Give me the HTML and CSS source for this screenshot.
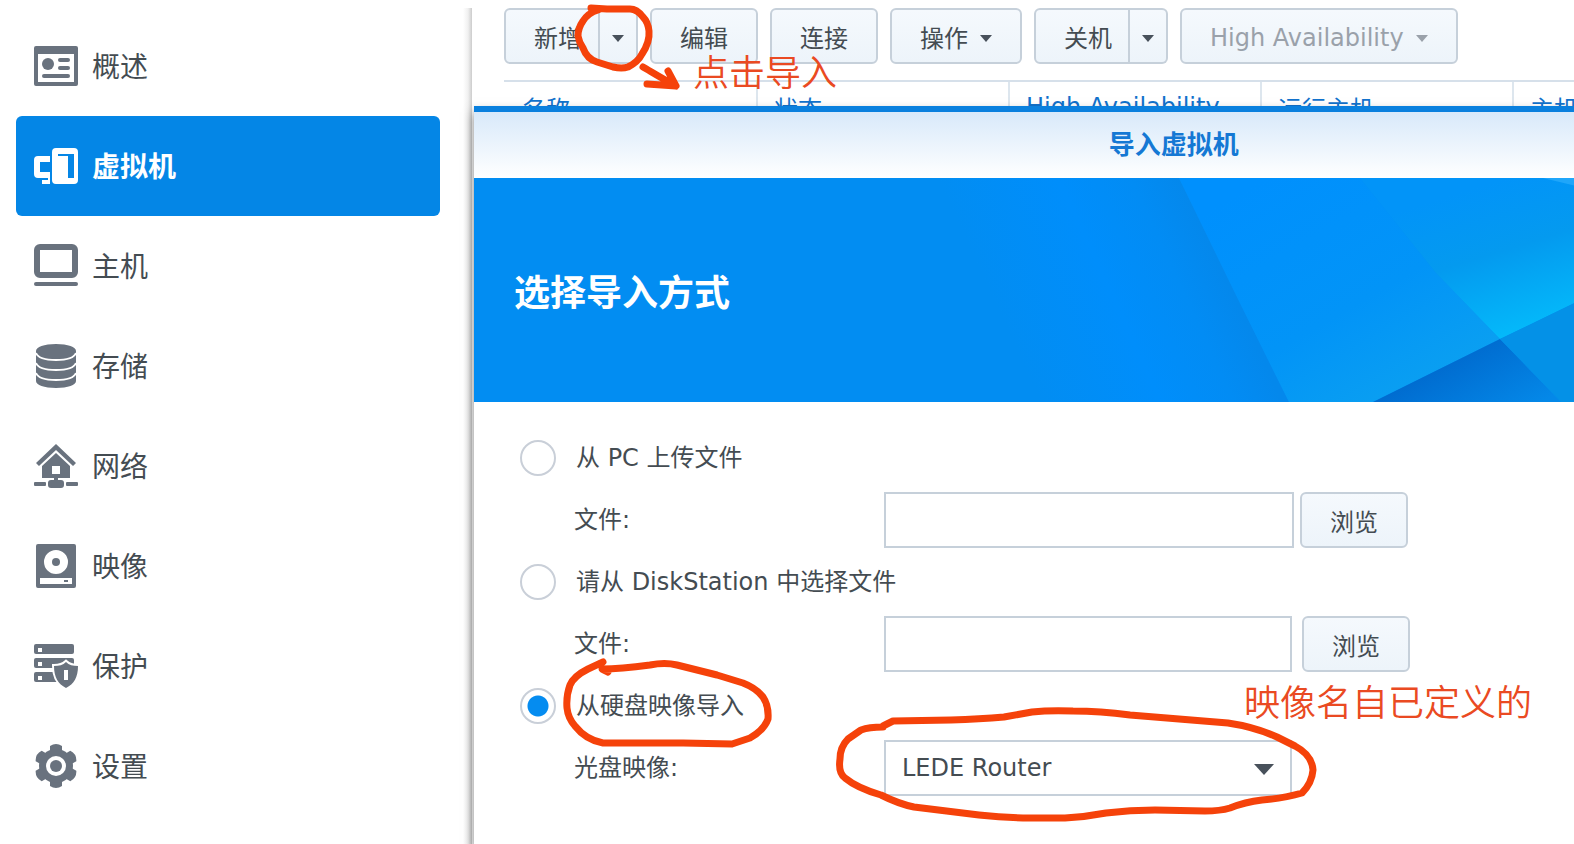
FILE: index.html
```html
<!DOCTYPE html>
<html lang="zh-CN">

<head>
    <meta charset="UTF-8">
    <meta name="viewport" content="width=device-width, initial-scale=1.0">
    <title>导入虚拟机</title>
    <link rel="stylesheet" href="styles.css">
</head>

<body>
    <div class="app">
        <nav class="sidebar">
            <a class="nav-item" href="#overview">
                <svg class="nav-icon" viewBox="0 0 44 44">
                    <path fill-rule="evenodd" d="M2 2h40a2 2 0 0 1 2 2v36a2 2 0 0 1-2 2H2a2 2 0 0 1-2-2V4a2 2 0 0 1 2-2zM4 10v28h36V10z"/>
                    <circle cx="14" cy="20" r="6"/>
                    <rect x="24" y="14" width="12" height="4" rx="2"/>
                    <rect x="24" y="22" width="12" height="4" rx="2"/>
                    <rect x="8" y="30" width="28" height="4" rx="2"/>
                </svg>
                <span class="nav-text">概述</span>
            </a>
            <a class="nav-item active" href="#vm">
                <svg class="nav-icon" viewBox="0 0 44 44">
                    <path d="M4 12h12v6H6v10h10v8h-2v-2H4a4 4 0 0 1-4-4V16a4 4 0 0 1 4-4zM8 36h8v4H8z"/>
                    <path fill-rule="evenodd" d="M22 4h18a4 4 0 0 1 4 4v28a4 4 0 0 1-4 4H22a4 4 0 0 1-4-4V8a4 4 0 0 1 4-4zM24 10v2h10v22h6V10z"/>
                </svg>
                <span class="nav-text">虚拟机</span>
            </a>
            <a class="nav-item" href="#host">
                <svg class="nav-icon" viewBox="0 0 44 44">
                    <path fill-rule="evenodd" d="M6 0h32a6 6 0 0 1 6 6v22a6 6 0 0 1-6 6H6a6 6 0 0 1-6-6V6a6 6 0 0 1 6-6zM6 6v22h32V6z"/>
                    <rect y="38" width="44" height="4" rx="2"/>
                </svg>
                <span class="nav-text">主机</span>
            </a>
            <a class="nav-item" href="#storage">
                <svg class="nav-icon" viewBox="0 0 44 44">
                    <path d="M2 7C2 3 10 0 22 0s20 3 20 7v30c0 4-8 7-20 7S2 41 2 37z"/>
                    <path class="cut" d="M2 9c2 5 10 7 20 7s18-2 20-7M2 19c2 5 10 7 20 7s18-2 20-7M2 29c2 5 10 7 20 7s18-2 20-7"/>
                </svg>
                <span class="nav-text">存储</span>
            </a>
            <a class="nav-item" href="#network">
                <svg class="nav-icon" viewBox="0 0 44 44">
                    <path d="M22 0l20 19-3 3L22 6 5 22l-3-3z"/>
                    <path fill-rule="evenodd" d="M22 9l14 13v12H24v2h3a3 3 0 0 1 3 3v2a3 3 0 0 1-3 3H17a3 3 0 0 1-3-3v-2a3 3 0 0 1 3-3h3v-2H8V22zM18 22v8h8v-8z"/>
                    <rect y="38" width="12" height="4" rx="1"/>
                    <rect x="32" y="38" width="12" height="4" rx="1"/>
                </svg>
                <span class="nav-text">网络</span>
            </a>
            <a class="nav-item" href="#image">
                <svg class="nav-icon" viewBox="0 0 44 44">
                    <path fill-rule="evenodd" d="M4 0h36a2 2 0 0 1 2 2v40a2 2 0 0 1-2 2H4a2 2 0 0 1-2-2V2a2 2 0 0 1 2-2zM22 6a12 12 0 1 0 0 24 12 12 0 0 0 0-24zM6 34v6h32v-6z"/>
                    <circle cx="22" cy="18" r="4"/>
                    <rect x="30" y="36" width="4" height="2"/>
                </svg>
                <span class="nav-text">映像</span>
            </a>
            <a class="nav-item" href="#protection">
                <svg class="nav-icon" viewBox="0 0 44 44">
                    <rect width="40" height="10" rx="2"/>
                    <rect y="14" width="40" height="10" rx="2"/>
                    <rect y="28" width="40" height="10" rx="2"/>
                    <path class="hole" d="M4 4h4v4H4zM4 18h4v4H4zM4 32h4v4H4z"/>
                    <path class="shield" d="M32 18c3 3 7 4 12 4 0 11-4 18-12 22-8-4-12-11-12-22 5 0 9-1 12-4z"/>
                    <path class="hole" d="M30 26h4v10h-4z"/>
                </svg>
                <span class="nav-text">保护</span>
            </a>
            <a class="nav-item" href="#settings">
                <svg class="nav-icon" viewBox="0 0 44 44">
                    <path d="M16 8V2q6-4 12 0v6zM16 36v6q6 4 12 0v-6z"/>
                    <path d="M16 8V2q6-4 12 0v6zM16 36v6q6 4 12 0v-6z" transform="rotate(60 22 22)"/>
                    <path d="M16 8V2q6-4 12 0v6zM16 36v6q6 4 12 0v-6z" transform="rotate(120 22 22)"/>
                    <circle cx="22" cy="22" r="17"/>
                    <circle class="hole" cx="22" cy="22" r="10"/>
                    <circle cx="22" cy="22" r="6"/>
                </svg>
                <span class="nav-text">设置</span>
            </a>
        </nav>

        <main class="main">
            <div class="toolbar">
                <div class="split">
                    <button class="btn" type="button">新增</button>
                    <button class="btn btn-arrow" type="button" aria-label="新增选项"><span class="caret"></span></button>
                </div>
                <button class="btn" type="button">编辑</button>
                <button class="btn" type="button">连接</button>
                <button class="btn" type="button">操作<span class="caret"></span></button>
                <div class="split">
                    <button class="btn" type="button">关机</button>
                    <button class="btn btn-arrow" type="button" aria-label="关机选项"><span class="caret"></span></button>
                </div>
                <button class="btn" type="button" disabled><span class="latin">High Availability</span><span class="caret"></span></button>
            </div>
            <table class="vm-table">
                <thead>
                    <tr>
                        <th>名称</th>
                        <th>状态</th>
                        <th>High Availability</th>
                        <th>运行主机</th>
                        <th>主机</th>
                    </tr>
                </thead>
            </table>

            <section class="dialog" role="dialog" aria-labelledby="dialog-title">
                <h1 class="dialog-title" id="dialog-title">导入虚拟机</h1>
                <div class="banner">
                    <svg class="banner-art" viewBox="0 0 1400 224" preserveAspectRatio="xMinYMin slice">
                        <defs>
                            <linearGradient id="fold" gradientUnits="userSpaceOnUse" x1="557" y1="204" x2="757" y2="112">
                                <stop offset="0" stop-color="#028df2"/>
                                <stop offset=".5" stop-color="#008efb"/>
                                <stop offset=".8" stop-color="#028cf4"/>
                                <stop offset="1" stop-color="#0488ec"/>
                            </linearGradient>
                            <linearGradient id="middle" gradientUnits="userSpaceOnUse" x1="790" y1="0" x2="920" y2="224">
                                <stop offset="0" stop-color="#0090fd"/>
                                <stop offset=".6" stop-color="#0294f7"/>
                                <stop offset="1" stop-color="#0a9ff1"/>
                            </linearGradient>
                            <linearGradient id="cyan" gradientUnits="userSpaceOnUse" x1="1000" y1="10" x2="1045" y2="155">
                                <stop offset="0" stop-color="#0294f8"/>
                                <stop offset=".45" stop-color="#049aef"/>
                                <stop offset="1" stop-color="#04b9fa"/>
                            </linearGradient>
                            <linearGradient id="deep" gradientUnits="userSpaceOnUse" x1="960" y1="185" x2="1000" y2="260">
                                <stop offset="0" stop-color="#006ace"/>
                                <stop offset="1" stop-color="#0488e8"/>
                            </linearGradient>
                        </defs>
                        <path fill="url(#fold)" d="M460 0h245l57 117 53 107H460z"/>
                        <path fill="url(#middle)" d="M705 0h181l76 95 64 66-127 63h-84l-53-107z"/>
                        <path fill="url(#cyan)" d="M886 0h514v-20L1026 161l-64-66z"/>
                        <path fill="#1fa6fa" d="M1069 0h331v80z"/>
                        <path fill="url(#deep)" d="M899 224l127-63 61 63z"/>
                        <path fill="#0491e7" d="M1026 161l374-181v244h-313z"/>
                    </svg>
                    <h2 class="banner-title">选择导入方式</h2>
                </div>
                <form class="import-form">
                    <label class="choice"><input type="radio" name="source"><span>从 PC 上传文件</span></label>
                    <div class="field">
                        <label for="pc-file">文件:</label>
                        <input class="text-box" id="pc-file" type="text">
                        <button class="btn" type="button">浏览</button>
                    </div>
                    <label class="choice"><input type="radio" name="source"><span>请从 DiskStation 中选择文件</span></label>
                    <div class="field field-narrow">
                        <label for="ds-file">文件:</label>
                        <input class="text-box" id="ds-file" type="text">
                        <button class="btn" type="button">浏览</button>
                    </div>
                    <label class="choice"><input type="radio" name="source" checked><span>从硬盘映像导入</span></label>
                    <div class="field field-narrow">
                        <label for="disk-image">光盘映像:</label>
                        <div class="select-wrap">
                            <select class="text-box" id="disk-image">
                                <option>LEDE Router</option>
                            </select>
                            <span class="caret caret-big"></span>
                        </div>
                    </div>
                </form>
            </section>
        </main>

        <!-- hand-drawn marks on top of everything -->
        <svg class="marks" width="1574" height="844" viewBox="0 0 1574 844">
            <path d="M598 10Q588 13 583 21Q578 28 578 36Q579 42 583 48Q587 59 597 62L613 67Q622 69 628 67Q638 62 642 54Q650 42 649 31Q648 22 643 17Q637 9 630 9L607 9L591 8"/>
            <path d="M643 67C650 71 663 79 676 86M668 71L676 86L647 84"/>
            <path d="M603 662L588 669Q574 676 570 685Q566 696 567 708Q568 718 575 726Q586 740 603 743L683 743L732 744L750 738Q764 730 768 719Q769 706 763 697Q756 688 743 683L717 675L677 665Q665 662 650 665C635 667 620 669 602 669L608 672"/>
            <path d="M883 727Q869 727 861 730L848 739Q840 747 840 759Q838 773 845 778Q857 788 881 795Q899 804 914 807L979 815Q1005 818 1030 818L1065 818Q1085 817 1106 813Q1130 810 1155 810L1205 811Q1220 811 1230 808Q1245 802 1262 800Q1285 798 1302 793Q1312 783 1313 770Q1312 755 1295 746L1277 737Q1255 727 1228 723L1179 719L1130 715Q1100 711 1073 711Q1050 710 1032 712L1004 717Q980 719 951 720L893 721L883 726"/>
        </svg>
        <p class="note note-click">点击导入</p>
        <p class="note note-name">映像名自已定义的</p>
    </div>
</body>

</html>
```
FILE: styles.css
```css
* {
    box-sizing: border-box;
}

body {
    margin: 0;
    background: #fff;
    color: #444c52;
    font-family: "DejaVu Sans", "Noto Sans CJK SC", sans-serif;
    font-size: 24px;
    overflow: hidden;
}

button, input, select {
    font: inherit;
    color: inherit;
}

.app {
    position: relative;
    display: flex;
    min-height: 100vh;
    padding-top: 8px;
    overflow: hidden;
}

/* sidebar */
.sidebar {
    width: 30%;
    max-width: 472px;
    flex-shrink: 0;
    padding: 8px 32px 0 16px;
    background: linear-gradient(to left, #ccc, #f0f0f0 4px, #fff 9px);
}

.nav-item {
    display: flex;
    align-items: center;
    gap: 14px;
    height: 100px;
    padding-left: 18px;
    border-radius: 6px;
    color: #444c52;
    font-family: "Noto Sans CJK SC", sans-serif;
    font-size: 28px;
    text-decoration: none;
}

.nav-item.active {
    background: #0486e6;
    color: #fff;
    font-weight: 700;
}

.nav-text {
    padding-bottom: 2px;
}

.nav-icon {
    width: 44px;
    height: 44px;
    fill: #69727e;
}

.active .nav-icon {
    fill: #fff;
}

.nav-icon .cut {
    fill: none;
    stroke: #fff;
    stroke-width: 2;
}

.nav-icon .hole {
    fill: #fff;
}

.nav-icon .shield {
    stroke: #fff;
    stroke-width: 4;
    paint-order: stroke;
}

/* toolbar */
.main {
    position: relative;
    flex: 1;
    min-width: 0;
    padding-left: 32px;
}

.toolbar {
    display: flex;
    gap: 12px;
}

.btn {
    display: flex;
    align-items: center;
    gap: 12px;
    height: 56px;
    padding: 0 28px;
    border: 2px solid #c6d0da;
    border-radius: 6px;
    background: linear-gradient(#f5f9fd, #edf4fa);
    white-space: nowrap;
}

.btn:disabled {
    color: #9aa1aa;
}

.btn .latin {
    padding-top: 4px;
}

.split {
    display: flex;
}

.split .btn:first-child {
    padding-right: 16px;
    border-radius: 6px 0 0 6px;
}

.split .btn-arrow {
    padding: 0 12px;
    border-left: none;
    border-radius: 0 6px 6px 0;
}

.caret {
    border: 6px solid transparent;
    border-top: 7px solid #48515b;
    border-bottom: none;
    transform: translateY(2px);
}

.btn:disabled .caret {
    border-top-color: #9aa1aa;
}

/* list header */
.vm-table {
    width: 1260px;
    margin-top: 16px;
    border-top: 2px solid #d6e0ea;
    border-collapse: separate;
    border-spacing: 0;
    table-layout: fixed;
}

.vm-table th {
    height: 50px;
    padding: 0 16px;
    border-left: 2px solid #dde6ee;
    color: #1272cc;
    font-weight: 400;
    text-align: left;
    white-space: nowrap;
}

.vm-table th:first-child {
    border-left-color: transparent;
}

/* import dialog, lies over the list */
.dialog {
    position: absolute;
    top: 98px;
    bottom: 0;
    left: 2px;
    width: 127%;
    border-top: 6px solid #0a80de;
    background: #fff;
    box-shadow: 0 6px 10px rgba(0, 0, 0, 0.5);
}

.dialog-title {
    margin: 0;
    background: linear-gradient(#d8e9fa, #fff);
    color: #1578d4;
    font-size: 26px;
    font-weight: 700;
    line-height: 66px;
    text-align: center;
}

.banner {
    position: relative;
    display: flex;
    align-items: center;
    height: 224px;
    padding-left: 40px;
    background: #028df2;
}

.banner-art {
    position: absolute;
    inset: 0;
    width: 100%;
    height: 100%;
}

.banner-title {
    position: relative;
    margin: 0;
    color: #fff;
    font-size: 36px;
    font-weight: 700;
}

.import-form {
    display: flex;
    flex-direction: column;
    gap: 6px;
    padding: 28px 46px;
}

.choice {
    display: flex;
    align-items: center;
    gap: 20px;
    height: 56px;
}

.choice span,
.field label {
    padding-bottom: 5px;
}

.choice input {
    appearance: none;
    width: 36px;
    height: 36px;
    margin: 0;
    border: 2px solid #c9cfd8;
    border-radius: 50%;
    background: #fff;
}

.choice input:checked {
    background: radial-gradient(circle, #058cf0 10px, #fff 11px);
}

.field {
    display: flex;
    align-items: center;
    gap: 6px;
    height: 56px;
    padding-left: 54px;
}

.field label {
    width: 304px;
}

.text-box {
    width: 410px;
    height: 56px;
    padding: 0 16px;
    border: 2px solid #c6d0da;
    border-radius: 0;
    background: #fff;
}

.field-narrow {
    gap: 10px;
}

.field-narrow label {
    width: 300px;
}

.field-narrow .text-box {
    width: 408px;
}

.select-wrap {
    position: relative;
}

.select-wrap select {
    appearance: none;
}

.caret-big {
    position: absolute;
    top: 22px;
    right: 18px;
    border-width: 11px 10px 0;
    pointer-events: none;
}

/* marks and notes */
.marks {
    position: absolute;
    top: 0;
    left: 0;
    fill: none;
    stroke: #f5420a;
    stroke-width: 7;
    stroke-linecap: round;
    stroke-linejoin: round;
    pointer-events: none;
}

.note {
    position: absolute;
    margin: 0;
    color: #ea4a22;
    font-family: "Noto Sans CJK SC", sans-serif;
    font-size: 36px;
    font-weight: 350;
    line-height: 40px;
    white-space: nowrap;
}

.note-click {
    top: 50px;
    left: 693px;
}

.note-name {
    top: 680px;
    left: 1244px;
}
```
